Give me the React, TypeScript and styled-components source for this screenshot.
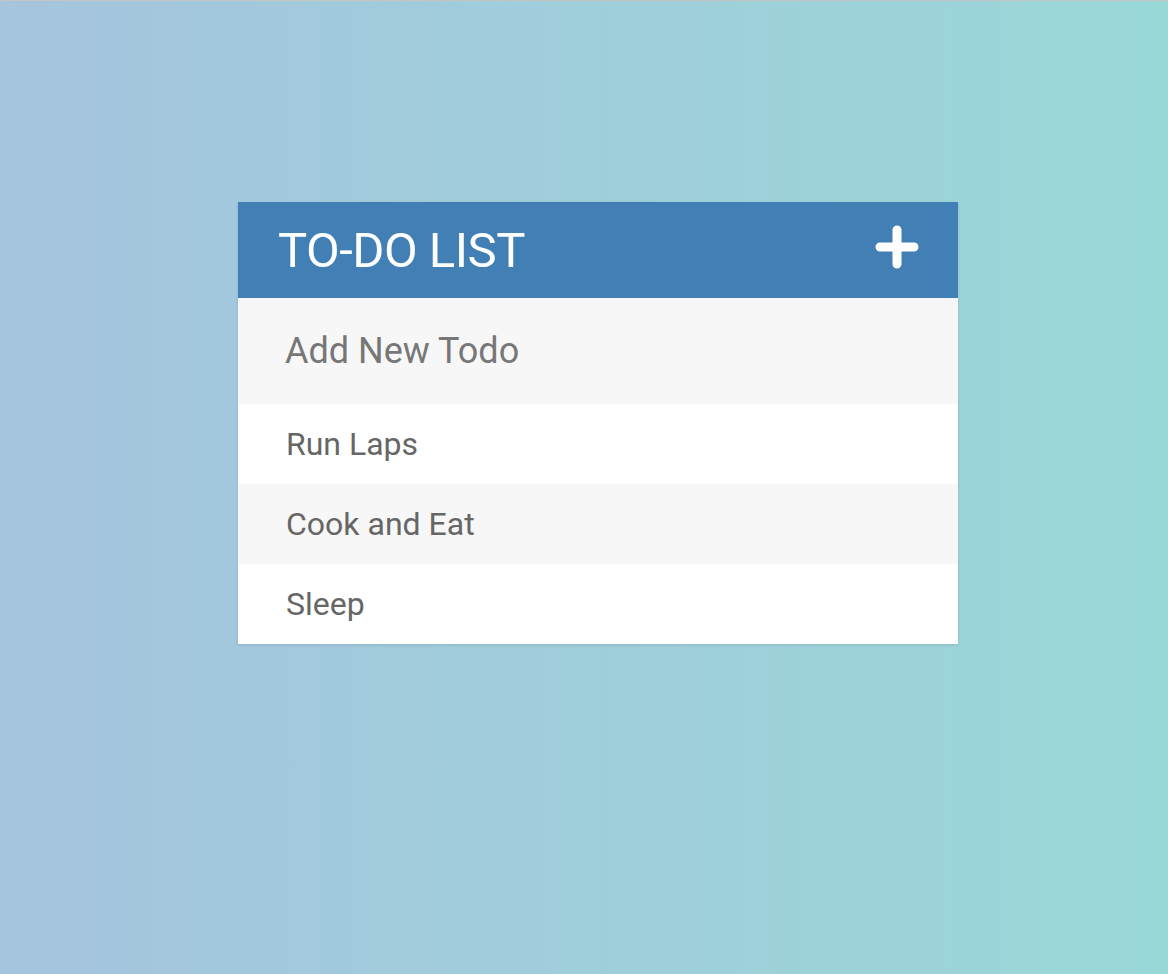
import React from "react";
import styled, { createGlobalStyle } from "styled-components";

const GlobalStyle = createGlobalStyle`
  html, body {
    margin: 0;
    padding: 0;
    height: 100%;
  }
  body {
    font-family: Roboto, "Liberation Sans", sans-serif;
  }
  #root {
    min-height: 100%;
  }
`;

const Page = styled.div`
  min-height: 974px;
  box-sizing: border-box;
  border-top: 1px solid #c4c4c4;
  background: linear-gradient(to right, #a5c4de, #9ad8d8);
  display: flex;
  justify-content: center;
  padding-top: 201px;
  padding-left: 28px;
`;

const Card = styled.div`
  width: 720px;
  align-self: flex-start;
  box-shadow: 0 1px 3px rgba(0, 0, 0, 0.12);
`;

const Header = styled.div`
  height: 96px;
  background: #427fb4;
  display: flex;
  align-items: center;
  justify-content: space-between;
  padding: 0 39px 0 40px;
  box-sizing: border-box;
`;

const Title = styled.h1`
  margin: 0;
  color: #fff;
  font-family: Roboto, "Liberation Sans", sans-serif;
  font-weight: 400;
  font-size: 49px;
  letter-spacing: -0.5px;
  line-height: 1;
`;

const AddButton = styled.button`
  border: 0;
  background: none;
  padding: 0;
  margin-bottom: 7px;
  display: flex;
  cursor: pointer;
`;

const NewTodo = styled.input`
  display: block;
  width: 100%;
  height: 106px;
  box-sizing: border-box;
  border: 0;
  outline: none;
  background: #f7f7f7;
  padding: 0 0 0 47px;
  font-family: Roboto, "Liberation Sans", sans-serif;
  font-size: 36px;
  color: #777;
  &::placeholder {
    color: #777;
  }
`;

const List = styled.ul`
  list-style: none;
  margin: 0;
  padding: 0;
`;

const Item = styled.li<{ $alt: boolean }>`
  height: 80px;
  display: flex;
  align-items: center;
  padding-left: 48px;
  background: ${(p) => (p.$alt ? "#f7f7f7" : "#fff")};
  color: #666;
  font-family: Roboto, "Liberation Sans", sans-serif;
  font-size: 32px;
`;

const todos = ["Run Laps", "Cook and Eat", "Sleep"];

export default function App() {
  return (
    <>
      <GlobalStyle />
      <Page>
        <Card>
          <Header>
            <Title>TO-DO LIST</Title>
            <AddButton aria-label="Add">
              <svg width="44" height="44" viewBox="0 0 44 44">
                <path
                  d="M22 5 V39 M5 22 H39"
                  stroke="#fff"
                  strokeWidth="9"
                  strokeLinecap="round"
                  fill="none"
                />
              </svg>
            </AddButton>
          </Header>
          <NewTodo placeholder="Add New Todo" />
          <List>
            {todos.map((t, i) => (
              <Item key={t} $alt={i % 2 === 1}>
                {t}
              </Item>
            ))}
          </List>
        </Card>
      </Page>
    </>
  );
}
